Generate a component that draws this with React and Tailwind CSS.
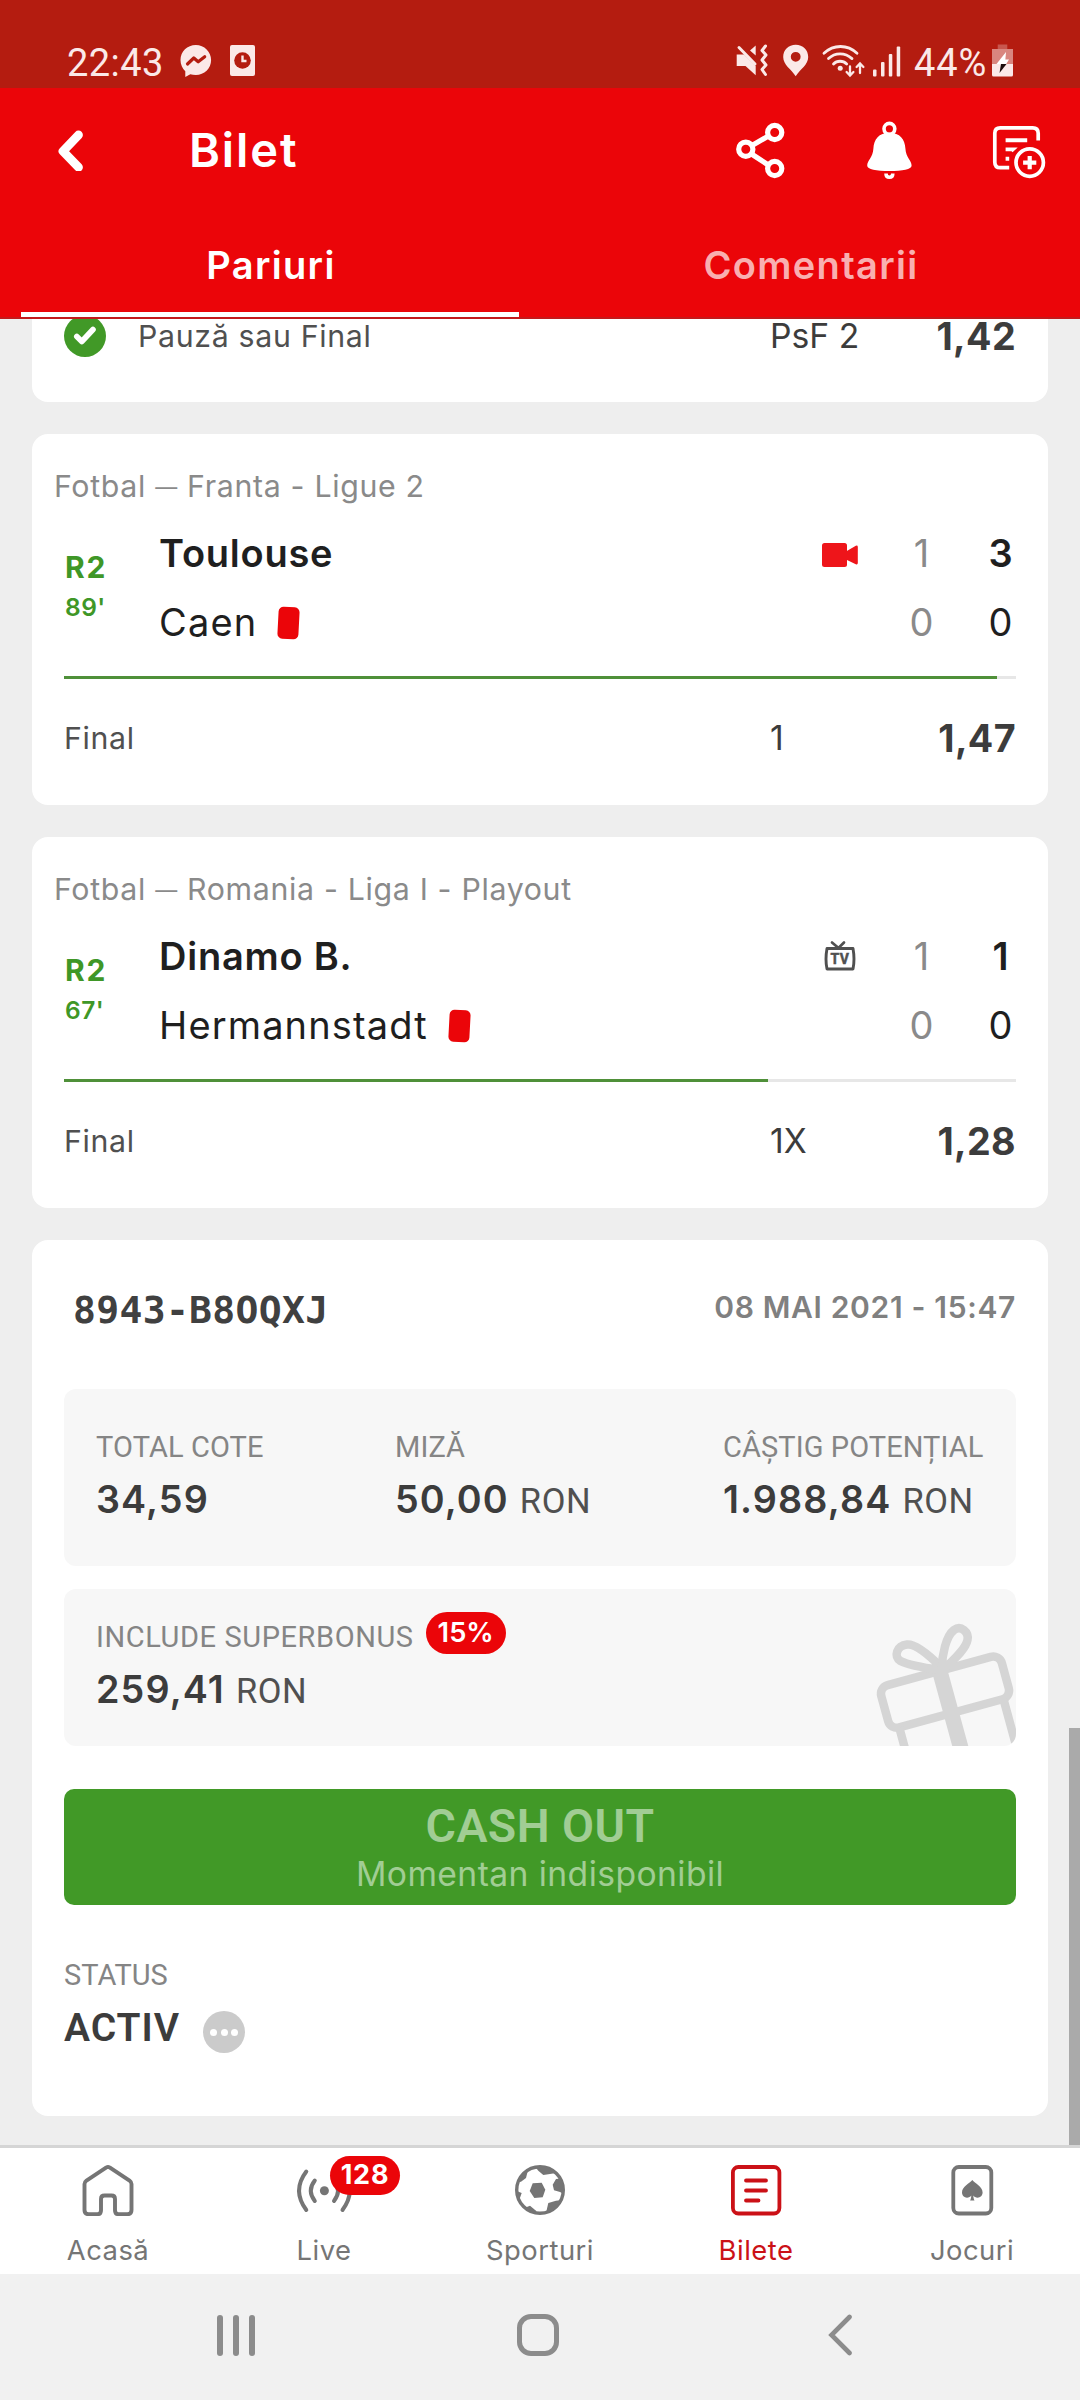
/**
 * App.jsx
 * Bet slip screen: status bar, header with tabs, match cards, ticket summary and bottom navigation.
 */

import React from 'react'

const matches = [
  {
    id: 1,
    sport: 'Fotbal',
    league: 'Franta - Ligue 2',
    period: 'R2',
    minute: "89'",
    progress: 98,
    media: 'video',
    home: { name: 'Toulouse', half: 1, total: 3 },
    away: { name: 'Caen', half: 0, total: 0, redCard: true },
    pick: '1',
    odds: '1,47',
  },
  {
    id: 2,
    sport: 'Fotbal',
    league: 'Romania - Liga I - Playout',
    period: 'R2',
    minute: "67'",
    progress: 74,
    media: 'tv',
    home: { name: 'Dinamo B.', half: 1, total: 1 },
    away: { name: 'Hermannstadt', half: 0, total: 0, redCard: true },
    pick: '1X',
    odds: '1,28',
  },
]

/* ---------- Status bar icons ---------- */

const MessengerIcon = () => (
  <svg width="32" height="34" viewBox="0 0 32 34" className="text-[#fbe9e8]">
    <path d="M15.8 1C7.3 1 .5 7.500 .5 16c0 4.600 1.900 8.400 4.800 11.200V33l5-2.700c1.700.5 3.600.8 5.500.8 8.500 0 15.300-6.600 15.300-15S24.300 1 15.800 1z" fill="currentColor" />
    <path d="M7.500 20l6.300-6 4.400 3.800 6.500-5" fill="none" stroke="#b41c10" strokeWidth="3.200" strokeLinejoin="round" strokeLinecap="round" />
  </svg>
)

const ClockFileIcon = () => (
  <svg width="25" height="34" viewBox="0 0 25 34">
    <rect x="0" y="1" width="25" height="31" rx="2" fill="#fbe9e8" />
    <circle cx="12.500" cy="16.500" r="8.300" fill="#b41c10" />
    <path d="M12.500 11.500v5.500h4" fill="none" stroke="#fbe9e8" strokeWidth="2.400" />
  </svg>
)

const MuteIcon = () => (
  <svg width="32" height="34" viewBox="0 0 32 34" fill="#fbe9e8">
    <path d="M.7 10.500H8L19.700 22v9.300L9.500 22H.7z" />
    <path d="M14 6.500l5.700-5V11.500z" />
    <path d="M3 3.500L19 20" fill="none" stroke="#fbe9e8" strokeWidth="3" strokeLinecap="round" />
    <path d="M29.500 2l-3.500 4.500 4 4.500-4 5 4 5-4 4.500 3.500 5" fill="none" stroke="#fbe9e8" strokeWidth="3" strokeLinecap="round" strokeLinejoin="round" />
  </svg>
)

const PinIcon = () => (
  <svg width="28" height="34" viewBox="0 0 28 34" fill="#fbe9e8">
    <path fillRule="evenodd" d="M13.700.8C6.500.8 1.200 6 1.200 13c0 8 8 12 12.500 19.200C18.200 25 26.200 21 26.200 13 26.200 6 20.900.8 13.700.8zm0 7.100a4.900 4.900 0 1 0 0 9.800 4.900 4.900 0 0 0 0-9.800z" />
  </svg>
)

const WifiIcon = () => (
  <svg width="44" height="34" viewBox="0 0 44 34" fill="none" stroke="#fbe9e8" strokeWidth="2.800" strokeLinecap="round">
    <path d="M2 9.300C11.500.2 25.500.2 35 9.300" />
    <path d="M6.500 14.600c6.500-6.400 16.500-6.400 23.500 0" />
    <path d="M11.500 20c3.500-3.700 9.500-3.700 13.200 0" />
    <circle cx="18.200" cy="24.300" r="2.500" fill="#fbe9e8" stroke="none" />
    <path d="M28 22.500v8.500M24.600 28l3.400 3.500 3.400-3.500M38 29v-8.500M34.600 23l3.400-3.500 3.400 3.500" strokeWidth="2.300" />
  </svg>
)

const SignalIcon = () => (
  <svg width="28" height="34" viewBox="0 0 28 34" fill="#fbe9e8">
    <rect x="0" y="25.500" width="3.500" height="7" rx="1" />
    <rect x="8" y="18" width="3.500" height="14.500" rx="1" />
    <rect x="15.800" y="10" width="3.500" height="22.500" rx="1" />
    <rect x="23.700" y="2.500" width="3.500" height="30" rx="1" />
  </svg>
)

const BatteryIcon = () => (
  <svg width="21" height="34" viewBox="0 0 21 34">
    <rect x="5.700" y="0.500" width="9.600" height="5" fill="#c8574e" />
    <rect x="0" y="5" width="21" height="15.500" fill="#d9867f" />
    <path d="M0 20h21v11a1.500 1.500 0 0 1-1.500 1.500h-18A1.500 1.500 0 0 1 0 31z" fill="#fbe9e8" />
    <path d="M14 8L4.500 20H13z" fill="#fff" />
    <path d="M10 15.500h7L14 20.200H7z" fill="#fff" />
    <path d="M9 20H14.500L7.500 29z" fill="#1c0d0c" />
  </svg>
)

/* ---------- Header icons ---------- */

const ShareIcon = () => (
  <svg width="52" height="60" viewBox="0 0 52 60" fill="none" stroke="#fff" strokeWidth="5.200">
    <path d="M17 25.500L33.500 16M16.500 34l17.500 11.500" />
    <circle cx="39.700" cy="12.500" r="7.100" />
    <circle cx="10.800" cy="29.200" r="7.100" />
    <circle cx="39.700" cy="48.500" r="7.100" />
  </svg>
)

const BellIcon = () => (
  <svg width="52" height="60" viewBox="0 0 52 60" fill="none" stroke="#fff" strokeWidth="3.600">
    <circle cx="25.400" cy="8.800" r="5.400" />
    <path d="M25.400 12.800c-10.500 0-15.600 6.700-16 15.700-.4 9-6.200 12-6.200 17 0 4 9 5.500 22.200 5.500s22.200-1.500 22.200-5.500c0-5-5.800-8-6.200-17-.4-9-5.500-15.700-16-15.700z" fill="#fff" stroke="none" />
    <path d="M22 53.500c0 2.500 1.200 3.700 3.400 3.700s3.400-1.200 3.400-3.700" />
  </svg>
)

const AddTicketIcon = () => (
  <svg width="56" height="60" viewBox="0 0 56 60" fill="none" stroke="#fff" strokeWidth="3.700">
    <path d="M47.200 20.500V13.300q0-5.500-5.500-5.500H9.300q-5.500 0-5.500 5.500V42.200q0 5.500 5.500 5.500h8.900" />
    <path d="M14.600 20.300h21.600M14.600 29.400h7.200l-1.600 1.500M14.600 38.700h3.600" strokeWidth="3.900" />
    <circle cx="38.700" cy="42.600" r="13.700" />
    <path d="M38.700 36v13.200M32.100 42.600h13.200" strokeWidth="4.200" />
  </svg>
)

/* ---------- Match icons ---------- */

const VideoIcon = () => (
  <svg width="36" height="24" viewBox="0 0 36 24" fill="#ee151a" className="mt-[3px]">
    <rect x="0" y="0" width="25" height="24" rx="2.500" />
    <path d="M24 8.500L33.800 2.700Q35.800 2 35.800 4v16q0 2-2 1.300L24 16.500z" />
  </svg>
)

const TvIcon = () => (
  <svg width="34" height="32" viewBox="0 0 34 32" className="-mt-[2px]" fill="none" stroke="#505050" strokeWidth="2.900">
    <path d="M9 2.500l6.500 5.500L21 2.500" strokeLinecap="round" strokeWidth="2.700" />
    <path d="M4 8.500h26q2 11 0 20.500H4q-2-9.500 0-20.500z" strokeLinejoin="round" />
    <text x="17" y="23.800" textAnchor="middle" fill="#505050" stroke="#505050" strokeWidth="0.500" className="font-['Roboto'] text-[14px] font-bold tracking-[0.500px]">TV</text>
  </svg>
)

const CheckIcon = () => (
  <svg width="42" height="42" viewBox="0 0 42 42">
    <circle cx="21" cy="21" r="21" fill="#419927" />
    <path d="M12.800 21.500l5 5L29 14.500" fill="none" stroke="#fff" strokeWidth="5.600" strokeLinecap="round" strokeLinejoin="round" />
  </svg>
)

const GiftIcon = () => (
  <svg width="144" height="128" viewBox="0 0 144 128" fill="none" stroke="#d5d5d5" strokeWidth="8.500" className="absolute right-0 bottom-0">
    <g transform="translate(73.500 74) rotate(-15.300)">
      <rect x="-63" y="-22" width="125" height="44" rx="9" />
      <path d="M-54 22v80M54 22v80" />
      <path d="M0-26V90" strokeWidth="15.500" />
    </g>
    <path d="M69 49C58 38 44 25.500 35 26.500c-10 1-14 12-6.500 16.500C38 48 54 50 69 52" />
    <path d="M70 50c0-13 4-32 12-38 7-5 15 2 13.500 10C93.500 32 80 43 71 52" />
  </svg>
)

/* ---------- Bottom navigation icons ---------- */

const HomeIcon = () => (
  <svg width="52" height="52" viewBox="0 0 52 52" fill="none" stroke="currentColor" strokeWidth="3.900">
    <path d="M2.500 20v26q0 4.200 4 4.200h9q3.500 0 3.500-4V35q0-3.500 3.500-3.500h7q3.500 0 3.500 3.500V46.200q0 4 3.500 4h9q4 0 4-4.200V20q0-2-2-3.500L27.600 3.500q-1.600-1.200-3.200 0L4.500 16.500q-2 1.500-2 3.500z" />
  </svg>
)

const LiveIcon = () => (
  <svg width="52" height="52" viewBox="0 0 52 52" fill="none" stroke="currentColor" strokeWidth="4" strokeLinecap="round" className="overflow-visible">
    <path d="M8.300 7.500q-14.500 19 0 38.500M16.800 16.500q-8 10.200 0 20.500M36 16.500q8 10.200 0 20.500M44.500 7.500q14.500 19 0 38.500" />
    <circle cx="26.400" cy="26.700" r="4.500" fill="currentColor" stroke="none" />
  </svg>
)

const BallIcon = () => (
  <svg width="52" height="52" viewBox="0 0 52 52" fill="currentColor">
    <clipPath id="ball">
      <circle cx="26" cy="26" r="24" />
    </clipPath>
    <circle cx="26" cy="26" r="23.300" fill="none" stroke="currentColor" strokeWidth="3.400" />
    <g clipPath="url(#ball)">
      <path d="M18.700 19.300l9-.6 3.600 7-2.600 7.600-8.400.7-4.600-7z" />
      <path d="M21 2.500l3.300 4.200 5 4.300 6.700-1 6-1-5-7-12-2z" />
      <path d="M1 15l5.700 3 5.300-4 2-8-8 0z" />
      <path d="M0 26l7.700 3-2.400 6.700L6.700 41 0 40z" />
      <path d="M9 44.500l7-2.800 6 5 2.500 5L12 52z" />
      <path d="M32 49l2.300-10 7.700-2.300 6-.7-2 12-13 4z" />
      <path d="M52 14l-10 1-3.300 5.700 1.300 5.600 6 1.700 6 3z" />
    </g>
  </svg>
)

const TicketIcon = () => (
  <svg width="52" height="52" viewBox="0 0 52 52" fill="none" stroke="currentColor" strokeWidth="3.800" strokeLinecap="round">
    <rect x="2.900" y="3" width="46.500" height="46.500" rx="5.500" />
    <path d="M16 16.500h20M16 26.500h20M16 36.500h12.500" />
  </svg>
)

const CardsIcon = () => (
  <svg width="52" height="52" viewBox="0 0 52 52" fill="currentColor">
    <rect x="7.300" y="3" width="38" height="46.500" rx="5.500" fill="none" stroke="currentColor" strokeWidth="3.800" />
    <path d="M26.300 16c2.500 3 10.300 6.500 10.300 12.500 0 3-2.300 5.200-5 5.200-1.800 0-3.400-.8-4.300-2.200.1 2.300.5 3.700 1.200 5h-4.400c.7-1.300 1.100-2.700 1.200-5-.9 1.400-2.500 2.200-4.300 2.200-2.700 0-5-2.200-5-5.200C16 22.500 23.800 19 26.300 16z" />
  </svg>
)

const navItems = [
  { label: 'Acasă', icon: HomeIcon },
  { label: 'Live', icon: LiveIcon, badge: '128' },
  { label: 'Sporturi', icon: BallIcon },
  { label: 'Bilete', icon: TicketIcon, active: true },
  { label: 'Jocuri', icon: CardsIcon },
]

/* ---------- Sections ---------- */

function StatusBar() {
  return (
    <div className="flex h-[88px] items-center justify-between bg-[#b41c10] pt-[34px] pr-[67px] pl-[67px] font-['Roboto',sans-serif] text-[38px] leading-none text-[#fbe9e8]">
      <div className="flex items-center">
        <span className="w-[113px] pt-[3px] tracking-[0.012em]">22:43</span>
        <MessengerIcon />
        <span className="ml-[18px]"><ClockFileIcon /></span>
      </div>
      <div className="flex items-center">
        <MuteIcon />
        <span className="ml-[14px]"><PinIcon /></span>
        <span className="ml-3"><WifiIcon /></span>
        <span className="ml-[7px]"><SignalIcon /></span>
        <span className="ml-[13px] w-[78px] pt-[3px] tracking-[0.023em]">44%</span>
        <BatteryIcon />
      </div>
    </div>
  )
}

function Header() {
  return (
    <header className="flex h-[231px] flex-col border-b-2 border-[#c3191b] bg-[#eb0509] font-semibold text-white">
      <div className="flex h-[124px] items-center pr-[33px] pl-[57px]">
        <svg width="27" height="42" viewBox="0 0 27 42" fill="none" stroke="#fff" strokeWidth="8.800" strokeLinecap="round" strokeLinejoin="round">
          <path d="M21.500 6L6 22.300l15.500 16" />
        </svg>
        <h1 className="ml-[105px] flex-1 text-[47px] tracking-[0.040em]">Bilet</h1>
        <div className="flex items-center">
          <ShareIcon />
          <span className="ml-[77px]"><BellIcon /></span>
          <span className="ml-[75px]"><AddTicketIcon /></span>
        </div>
      </div>
      <div className="flex text-[38px] tracking-[0.035em]">
        <div className="flex w-1/2 flex-col px-[21px]">
          <span className="flex h-[100px] items-center justify-center pt-1.5 pl-0.5">Pariuri</span>
          <span className="h-[5px] bg-white" />
        </div>
        <div className="flex w-1/2 flex-col px-[21px]">
          <span className="flex h-[100px] items-center justify-center pt-1.5 pl-0.5 text-[#f9afb0]">Comentarii</span>
        </div>
      </div>
    </header>
  )
}

function PickRow({ label, pick, odds, won }) {
  return (
    <div className="flex h-[42px] items-center leading-8 text-[#3c3c3c]">
      {won && <span className="mr-8"><CheckIcon /></span>}
      <span className="flex-1 text-[30.300px] tracking-[0.022em] text-[#505050]">{label}</span>
      <span className="w-[130px] text-[33.700px]">{pick}</span>
      <span className="w-[116px] text-right text-[37.700px] font-bold tracking-[0.010em]">{odds}</span>
    </div>
  )
}

function TeamRow({ team, media, leading }) {
  return (
    <div className={`flex h-[69px] items-center text-[38px] text-[#1f1f1f] ${leading ? 'font-semibold tracking-[0.020em]' : 'tracking-[0.030em]'}`}>
      <span>{team.name}</span>
      {team.redCard && <span className="ml-[21px] h-[32px] w-[21px] rotate-3 rounded-[5px] bg-[#eb0509]" />}
      <span className="ml-auto flex w-[56px] justify-center">
        {media === 'video' && <VideoIcon />}
        {media === 'tv' && <TvIcon />}
      </span>
      <span className="mr-10 ml-[30px] w-[47px] text-center font-normal tracking-normal text-[#8a8a8a]">{team.half}</span>
      <span className="w-[31px] text-center tracking-normal">{team.total}</span>
    </div>
  )
}

function MatchCard({ match }) {
  return (
    <section className="mt-8 flex h-[371px] flex-col rounded-2xl bg-white px-8 pt-8">
      <p className="-ml-[10px] h-10 text-[30.300px] leading-10 tracking-[0.022em] text-[#8a8a8a]">
        {match.sport} <span className="align-[2px] text-[22px] leading-none">—</span> {match.league}
      </p>
      <div className="mt-[13px] flex">
        <div className="w-[95px] pt-7 pl-px text-[#3f9727]">
          <div className="text-[30px] leading-10 font-bold tracking-[0.060em]">{match.period}</div>
          <div className="text-[24.500px] leading-[41px] font-semibold tracking-[0.020em]">{match.minute}</div>
        </div>
        <div className="flex-1">
          <TeamRow team={match.home} media={match.media} leading />
          <TeamRow team={match.away} />
        </div>
      </div>
      <div className="mt-[19px] mb-[38px] h-[3px] bg-[#e7e7e7]">
        <div className="h-full bg-[#4f9039]" style={{ width: `${match.progress}%` }} />
      </div>
      <PickRow label="Final" pick={match.pick} odds={match.odds} />
    </section>
  )
}

function Stat({ label, value, currency, badge }) {
  return (
    <div>
      <div className={`flex h-10 items-center pt-0.5 font-['Roboto',sans-serif] text-[29px] text-[#858585] ${badge ? 'tracking-[0.020em]' : 'tracking-[0.003em]'}`}>
        {label}
        {badge && (
          <span className="-mt-2.5 ml-[12px] flex h-[42px] w-[80px] items-center justify-center rounded-full bg-[#eb0509] font-['Inter',sans-serif] text-[27.300px] font-semibold tracking-normal text-white">
            {badge}
          </span>
        )}
      </div>
      <div className="mt-2.5 text-[37.700px] leading-[44px] font-semibold tracking-[0.030em] text-[#3c3c3c]">
        {value}
        {currency && <span className="ml-[11px] font-['Roboto',sans-serif] text-[34.5px] font-normal tracking-[0.015em] text-[#505050]">{currency}</span>}
      </div>
    </div>
  )
}

function TicketCard() {
  return (
    <section className="mt-8 h-[876px] rounded-2xl bg-white px-8 pt-[47px]">
      <div className="flex h-[102px] items-start justify-between leading-10">
        <span className="ml-[9px] pt-[3px] font-['DejaVu_Sans_Mono',monospace] text-[38px] font-bold tracking-[0.009em] text-[#404040]">8943-B8OQXJ</span>
        <span className="text-[30px] font-semibold tracking-[0.022em] text-[#808080]">08 MAI 2021 - 15:47</span>
      </div>

      <div className="flex h-[177px] rounded-xl bg-[#f7f7f7] pt-[38px] pl-8">
        <div className="w-[299px]">
          <Stat label="TOTAL COTE" value="34,59" />
        </div>
        <div className="w-[328px]">
          <Stat label="MIZĂ" value="50,00" currency="RON" />
        </div>
        <Stat label="CÂȘTIG POTENȚIAL" value="1.988,84" currency="RON" />
      </div>

      <div className="relative mt-[23px] h-[157px] overflow-hidden rounded-xl bg-[#f7f7f7] pt-7 pl-8">
        <Stat label="INCLUDE SUPERBONUS" value="259,41" currency="RON" badge="15%" />
        <GiftIcon />
      </div>

      <button className="mt-[43px] flex h-[116px] w-full flex-col items-center rounded-[10px] bg-[#419927] pt-[13px] text-[#a1cd94]">
        <span className="font-['Roboto',sans-serif] text-[46.5px] leading-[48px] font-semibold tracking-[0.009em]">CASH OUT</span>
        <span className="mt-0.5 text-[33.700px] leading-[44px] tracking-[0.012em]">Momentan indisponibil</span>
      </button>

      <div className="mt-[50px] font-['Roboto',sans-serif] text-[29px] leading-10 text-[#858585]">STATUS</div>
      <div className="mt-2.5 flex h-11 items-center">
        <span className="w-[117px] pt-0.5 font-['Roboto',sans-serif] text-[39px] font-semibold tracking-[0.025em] text-[#3c3c3c]">ACTIV</span>
        <span className="mt-2.5 ml-[22px] flex size-[42px] items-center justify-center gap-[3.500px] rounded-full bg-[#cbcbcb]">
          <i className="size-[7px] rounded-full bg-white" />
          <i className="size-[7px] rounded-full bg-white" />
          <i className="size-[7px] rounded-full bg-white" />
        </span>
      </div>
    </section>
  )
}

function BottomNav() {
  return (
    <nav className="flex h-[129px] border-t-[3px] border-[#d5d5d5] bg-white">
      {navItems.map(({ label, icon: Icon, badge, active }) => (
        <div key={label} className={`flex flex-1 flex-col items-center pt-4 ${active ? 'text-[#cb1117]' : 'text-[#757575]'}`}>
          <span className="relative">
            <Icon />
            {badge && (
              <span className="absolute -top-[8px] left-[32px] flex h-[39px] w-[70px] items-center justify-center rounded-full bg-[#eb0509] text-[27px] font-bold tracking-[0.030em] text-white">
                {badge}
              </span>
            )}
          </span>
          <span className="mt-[18px] text-[27.400px] leading-8 tracking-[0.018em]">{label}</span>
        </div>
      ))}
    </nav>
  )
}

function SystemNav() {
  return (
    <div className="flex h-[126px] items-center bg-[#f1f1f1] px-[85px] pb-1">
      <div className="flex w-[302px] justify-center gap-[10px]">
        <span className="h-[41px] w-[6px] rounded-full bg-[#8c8c8c]" />
        <span className="h-[41px] w-[6px] rounded-full bg-[#8c8c8c]" />
        <span className="h-[41px] w-[6px] rounded-full bg-[#8c8c8c]" />
      </div>
      <div className="flex w-[302px] justify-center">
        <span className="size-[42px] rounded-[14px] border-[5px] border-[#8c8c8c]" />
      </div>
      <div className="flex w-[302px] justify-center">
        <svg width="26" height="42" viewBox="0 0 26 42" fill="none" stroke="#8c8c8c" strokeWidth="4.600" strokeLinecap="round">
          <path d="M22.500 3L4.500 21l18 18" />
        </svg>
      </div>
    </div>
  )
}

export default function App() {
  return (
    <div className="flex h-[2400px] w-[1080px] flex-col overflow-hidden bg-[#eeeeee] font-['Inter','Roboto',sans-serif]">
      <StatusBar />
      <Header />
      <main className="relative h-[1826px] overflow-hidden px-8">
        <section className="h-[83px] rounded-b-2xl bg-white px-8">
          <div className="-translate-y-1">
            <PickRow label="Pauză sau Final" pick="PsF 2" odds="1,42" won />
          </div>
        </section>
        {matches.map(match => (
          <MatchCard key={match.id} match={match} />
        ))}
        <TicketCard />
        {/* Scroll indicator */}
        <div className="absolute right-0 bottom-0 h-[417px] w-[11px] bg-[#aaaaaa]" />
      </main>
      <BottomNav />
      <SystemNav />
    </div>
  )
}
